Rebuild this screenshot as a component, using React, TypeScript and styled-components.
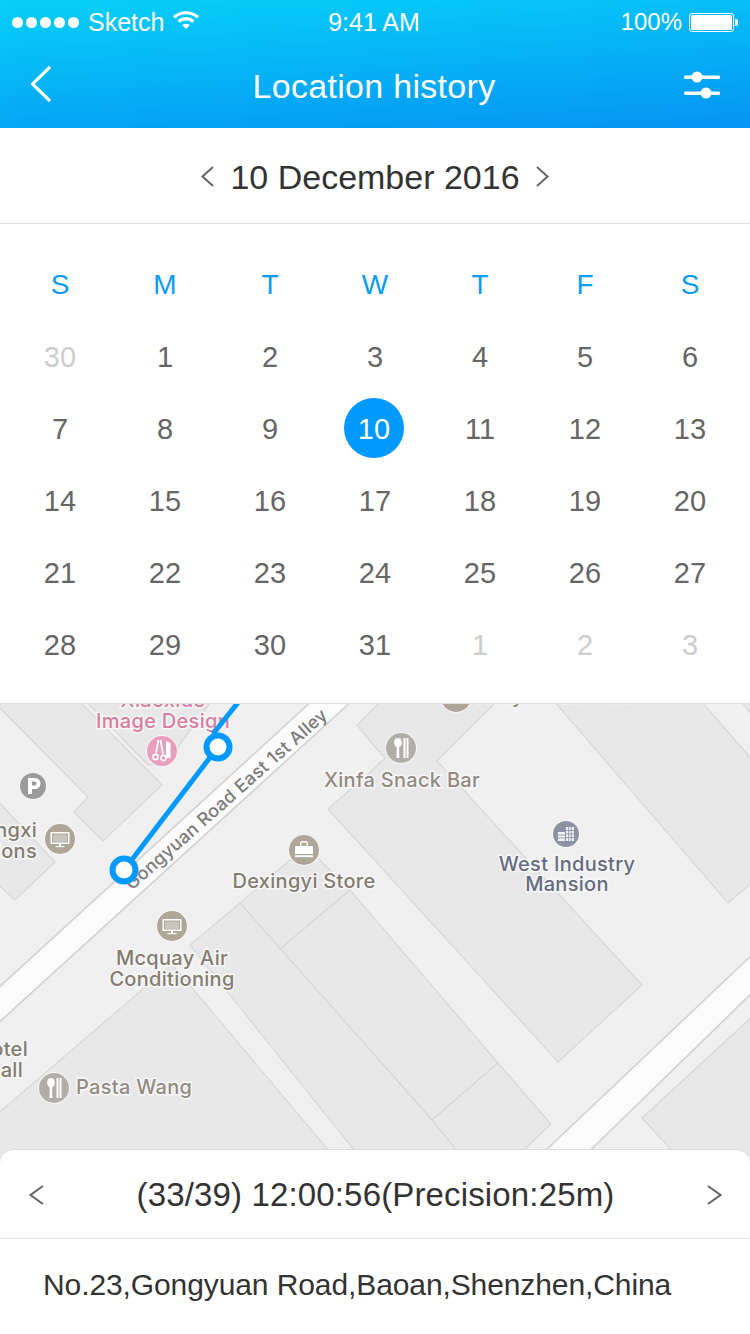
import React from 'react';
import styled, { createGlobalStyle } from 'styled-components';

const Global = createGlobalStyle`
  html, body { margin: 0; padding: 0; background: #fff; }
  body { font-family: "Liberation Sans", Arial, sans-serif; }
  * { box-sizing: border-box; }
`;

const Page = styled.div`
  width: 750px;
  height: 1334px;
  overflow: hidden;
  display: flex;
  flex-direction: column;
  background: #fff;
`;

const Header = styled.header`
  height: 128px;
  color: #fff;
  background: linear-gradient(176deg, #07d0f8 0%, #0594f3 100%);
  display: flex;
  flex-direction: column;
`;

const StatusBar = styled.div`
  height: 40px;
  padding: 0 14px 0 12px;
  display: grid;
  grid-template-columns: 1fr auto 1fr;
  align-items: center;
  font-size: 25px;
  line-height: 44px;
`;

const StatusLeft = styled.div`
  display: flex;
  align-items: center;
`;

const StatusRight = styled.div`
  display: flex;
  align-items: center;
  justify-content: flex-end;
  gap: 7px;
  font-size: 24px;
`;

const SignalDots = styled.span`
  display: flex;
  gap: 3px;
  margin-right: 9px;
`;

const Dot = styled.i`
  display: block;
  width: 11px;
  height: 11px;
  border-radius: 50%;
  background: #fff;
`;

const Battery = styled.span`
  position: relative;
  display: block;
  width: 45px;
  height: 19px;
  border: 1px solid #fff;
  border-radius: 3px;
  padding: 1px;
  margin-right: 2px;
  &::before {
    content: '';
    display: block;
    height: 100%;
    background: #fff;
    border-radius: 1.5px;
  }
  &::after {
    content: '';
    position: absolute;
    right: -5px;
    top: 5px;
    width: 3px;
    height: 7px;
    background: #fff;
    border-radius: 0 2px 2px 0;
  }
`;

const NavBar = styled.nav`
  height: 88px;
  padding: 0 30px 0 31px;
  display: flex;
  align-items: center;
  justify-content: space-between;
`;

const NavTitle = styled.h1`
  margin: 4px 0 0 13px;
  font-size: 34px;
  font-weight: 400;
  letter-spacing: 0.3px;
  line-height: 36px;
`;

const DateBar = styled.div`
  height: 96px;
  padding-top: 2px;
  border-bottom: 1px solid #e5e5e5;
  display: flex;
  align-items: center;
  justify-content: center;
  gap: 16px;
  color: #333;
`;

const DateLabel = styled.div`
  font-size: 34px;
  line-height: 38px;
`;

const Calendar = styled.section`
  height: 480px;
  padding: 25px 7.5px 0;
  display: grid;
  grid-template-columns: repeat(7, 105px);
  grid-auto-rows: 72px;
  border-bottom: 1px solid #e3e3e3;
`;

const WeekDay = styled.div`
  display: flex;
  align-items: center;
  justify-content: center;
  font-size: 28px;
  color: #0a9bf6;
`;

const DayCell = styled.div`
  display: flex;
  align-items: center;
  justify-content: center;
`;

const DayNumber = styled.span<{ $muted?: boolean; $selected?: boolean }>`
  width: 60px;
  height: 60px;
  border-radius: 50%;
  display: flex;
  align-items: center;
  justify-content: center;
  font-size: 29px;
  margin: ${p => (p.$selected ? '-2px 2px 0 0' : '0')};
  padding-top: ${p => (p.$selected ? '2px' : '0')};
  color: ${p => (p.$selected ? '#fff' : p.$muted ? '#cdcdcd' : '#666')};
  background: ${p => (p.$selected ? '#0099ff' : 'transparent')};
`;

const MapView = styled.svg`
  display: block;
  width: 750px;
  height: 459px;
  flex: none;
  background: #f0f0f0;
`;

const MapLabel = styled.text<{ $tone: string; $size?: number }>`
  font-family: Inter, "Liberation Sans", sans-serif;
  font-size: ${p => p.$size ?? 20}px;
  font-weight: 500;
  letter-spacing: 0.3px;
  fill: ${p => p.$tone};
  stroke: #f7f7f7;
  stroke-width: 3px;
  paint-order: stroke;
`;

const InfoCard = styled.section`
  position: relative;
  margin-top: -14px;
  flex: 1;
  background: #fff;
  border-top: 1px solid #dcdcdc;
  border-radius: 14px 14px 0 0;
`;

const InfoHead = styled.div`
  height: 89px;
  padding: 2px 28px 0 29px;
  border-bottom: 1px solid #e5e5e5;
  display: flex;
  align-items: center;
  justify-content: space-between;
  color: #333;
`;

const InfoTitle = styled.div`
  font-size: 33px;
  letter-spacing: 0.15px;
  line-height: 38px;
`;

const Address = styled.div`
  padding: 0 43px;
  height: 92px;
  display: flex;
  align-items: center;
  font-size: 30px;
  letter-spacing: -0.1px;
  color: #333;
`;

const Chevron = ({ dir, w, h, color, stroke }: { dir: 'l' | 'r'; w: number; h: number; color: string; stroke: number }) => (
  <svg width={w} height={h} viewBox={`0 0 ${w} ${h}`} fill="none" stroke={color} strokeWidth={stroke}>
    <path d={dir === 'l' ? `M${w - 1} 1 L1.5 ${h / 2} L${w - 1} ${h - 1}` : `M1 1 L${w - 1.5} ${h / 2} L1 ${h - 1}`} />
  </svg>
);

const Wifi = () => (
  <svg width="28" height="20" viewBox="0 0 28 20" style={{ marginLeft: 8, marginTop: -6 }}>
    <path d="M1 7 C8.5 0.5 19.5 0.5 27 7 L24.8 9.4 C18.5 4 9.5 4 3.2 9.4 Z" fill="#fff" />
    <path d="M5.6 11.4 C10.8 7 17.2 7 22.4 11.4 L20.2 13.8 C16.5 10.8 11.5 10.8 7.8 13.8 Z" fill="#fff" />
    <path d="M10.2 16 C12.6 14.2 15.4 14.2 17.8 16 L14 20 Z" fill="#fff" />
  </svg>
);

const Sliders = () => (
  <svg width="36" height="30" viewBox="0 0 36 30" fill="#fff">
    <rect x="0" y="6.5" width="36" height="3.5" rx="1.5" />
    <rect x="0" y="22.5" width="36" height="3.5" rx="1.5" />
    <circle cx="13" cy="8" r="5.5" />
    <circle cx="22" cy="24" r="5.5" />
  </svg>
);

const WEEK = ['S', 'M', 'T', 'W', 'T', 'F', 'S'];
const DAYS: { n: number; muted?: boolean }[] = [
  { n: 30, muted: true },
  ...Array.from({ length: 31 }, (_, i) => ({ n: i + 1 })),
  { n: 1, muted: true },
  { n: 2, muted: true },
  { n: 3, muted: true },
];

const BLOCKS = [
  '-5,700 -5,703 88,797 74,812 103,841 162,785 78,700',
  '-5,798 55,862 15,900 -5,882',
  '85,700 148,765 165,765 212,700',
  '498,700 437,761 642,985 558,1062 328,809 375,768 385,758 375,747 357,725 382,700',
  '553,700 728,903 755,880 755,763 700,700',
  '740,700 755,700 755,718',
  '306,846 240,903 280,949 350,890',
  '350,890 280,949 432,1120 498,1063',
  '240,903 190,945 370,1170 473,1170 432,1120',
  '-5,1116 172,964 345,1170 -5,1170',
  '498,1063 432,1120 473,1170 503,1170 551,1124',
  '642,1118 755,1014 755,1170 690,1170',
];

const ROADS = [
  '313,700 353,700 -5,1026 -5,991',
  '755,952 755,990 570,1170 525,1170',
];

const Pin = ({ x, y, r, fill, children }: { x: number; y: number; r: number; fill: string; children?: React.ReactNode }) => (
  <g transform={`translate(${x} ${y})`}>
    <circle r={r + 1} fill="#f6f6f6" />
    <circle r={r} fill={fill} />
    {children}
  </g>
);

const MonitorGlyph = () => (
  <g fill="#fff">
    <path fillRule="evenodd" d="M-9.5 -7 H9.5 V5 H-9.5 Z M-8 -5.5 V3.5 H8 V-5.5 Z" />
    <rect x="-7" y="-4.5" width="14" height="7.5" fillOpacity="0.35" />
    <rect x="-1" y="5" width="2" height="2.5" />
    <rect x="-4.5" y="7" width="9" height="1.2" />
  </g>
);

const CutleryGlyph = () => (
  <g fill="#fff">
    <path d="M-3 -10 C-6.5 -10 -7.5 -6.5 -6.5 -3.5 C-6 -2 -5 -1 -4.2 -0.5 L-4.6 10 H-1.6 L-2 -0.5 C-1 -1 0 -2 0.5 -3.5 C1.3 -6.5 0.5 -10 -3 -10 Z" />
    <rect x="2.5" y="-10" width="2" height="20" />
    <rect x="5.5" y="-10" width="2" height="20" />
  </g>
);

const SalonGlyph = () => (
  <g>
    <path d="M-3.5 -11 L-6 2 M-1.5 -11 L1 3" stroke="#fff" strokeWidth="1.8" fill="none" />
    <circle cx="-6.5" cy="6" r="2.6" fill="none" stroke="#fff" strokeWidth="1.6" />
    <circle cx="1.5" cy="7" r="2.6" fill="none" stroke="#fff" strokeWidth="1.6" />
    <path d="M4 -10 L8.5 -8 V7 H5.5 L4 4 Z" fill="#fff" />
  </g>
);

const TowerGlyph = () => (
  <g>
    <path d="M-8 -2 H-1 V7 H-8 Z M0 -7 H8 V7 H0 Z" fill="#fff" fillOpacity="0.9" />
    <path d="M-8 1 H-1 M-8 4 H-1 M0 -3.5 H8 M0 0 H8 M0 3.5 H8 M2.7 -7 V7 M5.3 -7 V7" stroke="#8e93a4" strokeWidth="0.9" fill="none" />
  </g>
);

const MapScene = () => (
  <MapView viewBox="0 704 750 459">
    {BLOCKS.map(p => (
      <polygon key={p} points={p} fill="#e8e8e8" stroke="#d7d7d7" strokeWidth="1.2" />
    ))}
    {ROADS.map(p => (
      <polygon key={p} points={p} fill="#fbfbfb" stroke="#d2d2d2" strokeWidth="1.6" />
    ))}

    <g transform="rotate(-41.5 229 797)">
      <MapLabel $tone="#7b7b7b" $size={18} x="225.5" y="803" textAnchor="middle" style={{ stroke: 'none' }}>
        Gongyuan Road East 1st Alley
      </MapLabel>
    </g>

    <Pin x={456} y={697} r={15} fill="#aea698" />
    <MapLabel $tone="#8a8478" x="476" y="703">Kelly Audio Store</MapLabel>

    <MapLabel $tone="#d97da0" x="163" y="707" textAnchor="middle">Xiaoxide</MapLabel>
    <MapLabel $tone="#d97da0" x="163" y="728" textAnchor="middle">Image Design</MapLabel>
    <Pin x={162} y={751} r={15} fill="#e79fbc"><SalonGlyph /></Pin>

    <Pin x={33} y={786} r={13} fill="#9b9b9b">
      <path fillRule="evenodd" d="M-5 -8 H2 A5.5 5.5 0 0 1 2 3 H-1 V8 H-5 Z M-1 -4.5 V-0.5 H1.5 A2 2 0 0 0 1.5 -4.5 Z" fill="#fff" />
    </Pin>

    <MapLabel $tone="#837c70" x="37" y="837" textAnchor="end">ngxi</MapLabel>
    <MapLabel $tone="#837c70" x="37" y="858" textAnchor="end">ions</MapLabel>
    <Pin x={60} y={839} r={15} fill="#aea698"><MonitorGlyph /></Pin>

    <Pin x={401} y={748} r={15} fill="#b1aeaa"><CutleryGlyph /></Pin>
    <MapLabel $tone="#918b82" x="402" y="787" textAnchor="middle">Xinfa Snack Bar</MapLabel>

    <Pin x={304} y={850} r={15} fill="#aea698">
      <path fillRule="evenodd" d="M-9 -4 H-4 V-6.5 C-4 -8 -3 -9 -1.5 -9 H1.5 C3 -9 4 -8 4 -6.5 V-4 H9 V4 H-9 Z M-2.5 -4 H2.5 V-6.5 C2.5 -7 2 -7.5 1.5 -7.5 H-1.5 C-2 -7.5 -2.5 -7 -2.5 -6.5 Z" fill="#fff" />
      <rect x="-9" y="5.2" width="18" height="2" fill="#fff" />
    </Pin>
    <MapLabel $tone="#837c70" x="304" y="888" textAnchor="middle">Dexingyi Store</MapLabel>

    <Pin x={566} y={834} r={13} fill="#8e93a4"><TowerGlyph /></Pin>
    <MapLabel $tone="#666c80" x="567" y="871" textAnchor="middle">West Industry</MapLabel>
    <MapLabel $tone="#666c80" x="567" y="891" textAnchor="middle">Mansion</MapLabel>

    <Pin x={172} y={926} r={15} fill="#aea698"><MonitorGlyph /></Pin>
    <MapLabel $tone="#837c70" x="172" y="965" textAnchor="middle">Mcquay Air</MapLabel>
    <MapLabel $tone="#837c70" x="172" y="986" textAnchor="middle">Conditioning</MapLabel>

    <MapLabel $tone="#837c70" x="28" y="1056" textAnchor="end">otel</MapLabel>
    <MapLabel $tone="#837c70" x="23" y="1077" textAnchor="end">all</MapLabel>

    <Pin x={54} y={1088} r={15} fill="#b1aeaa"><CutleryGlyph /></Pin>
    <MapLabel $tone="#918b82" x="76" y="1094">Pasta Wang</MapLabel>

    <g fill="none" stroke="#0099ff" strokeWidth="5">
      <path d="M240 700 L213 734" />
      <path d="M218 747 L124 870" />
      <circle cx="218" cy="747" r="11.5" fill="#fff" strokeWidth="6" />
      <circle cx="124" cy="870" r="11.5" fill="#fff" strokeWidth="6" />
    </g>
  </MapView>
);

export default function App() {
  return (
    <Page>
      <Global />
      <Header>
        <StatusBar>
          <StatusLeft>
            <SignalDots>
              {[0, 1, 2, 3, 4].map(i => <Dot key={i} />)}
            </SignalDots>
            Sketch
            <Wifi />
          </StatusLeft>
          <span>9:41 AM</span>
          <StatusRight>
            100%
            <Battery />
          </StatusRight>
        </StatusBar>
        <NavBar>
          <Chevron dir="l" w={20} h={36} color="#fff" stroke={3.2} />
          <NavTitle>Location history</NavTitle>
          <Sliders />
        </NavBar>
      </Header>
      <DateBar>
        <Chevron dir="l" w={13} h={21} color="#666" stroke={2} />
        <DateLabel>10 December 2016</DateLabel>
        <Chevron dir="r" w={13} h={21} color="#666" stroke={2} />
      </DateBar>
      <Calendar>
        {WEEK.map((d, i) => <WeekDay key={i}>{d}</WeekDay>)}
        {DAYS.map((d, i) => (
          <DayCell key={i}>
            <DayNumber $muted={d.muted} $selected={d.n === 10 && !d.muted}>{d.n}</DayNumber>
          </DayCell>
        ))}
      </Calendar>
      <MapScene />
      <InfoCard>
        <InfoHead>
          <Chevron dir="l" w={15} h={20} color="#666" stroke={2} />
          <InfoTitle>(33/39) 12:00:56(Precision:25m)</InfoTitle>
          <Chevron dir="r" w={15} h={20} color="#666" stroke={2} />
        </InfoHead>
        <Address>No.23,Gongyuan Road,Baoan,Shenzhen,China</Address>
      </InfoCard>
    </Page>
  );
}
